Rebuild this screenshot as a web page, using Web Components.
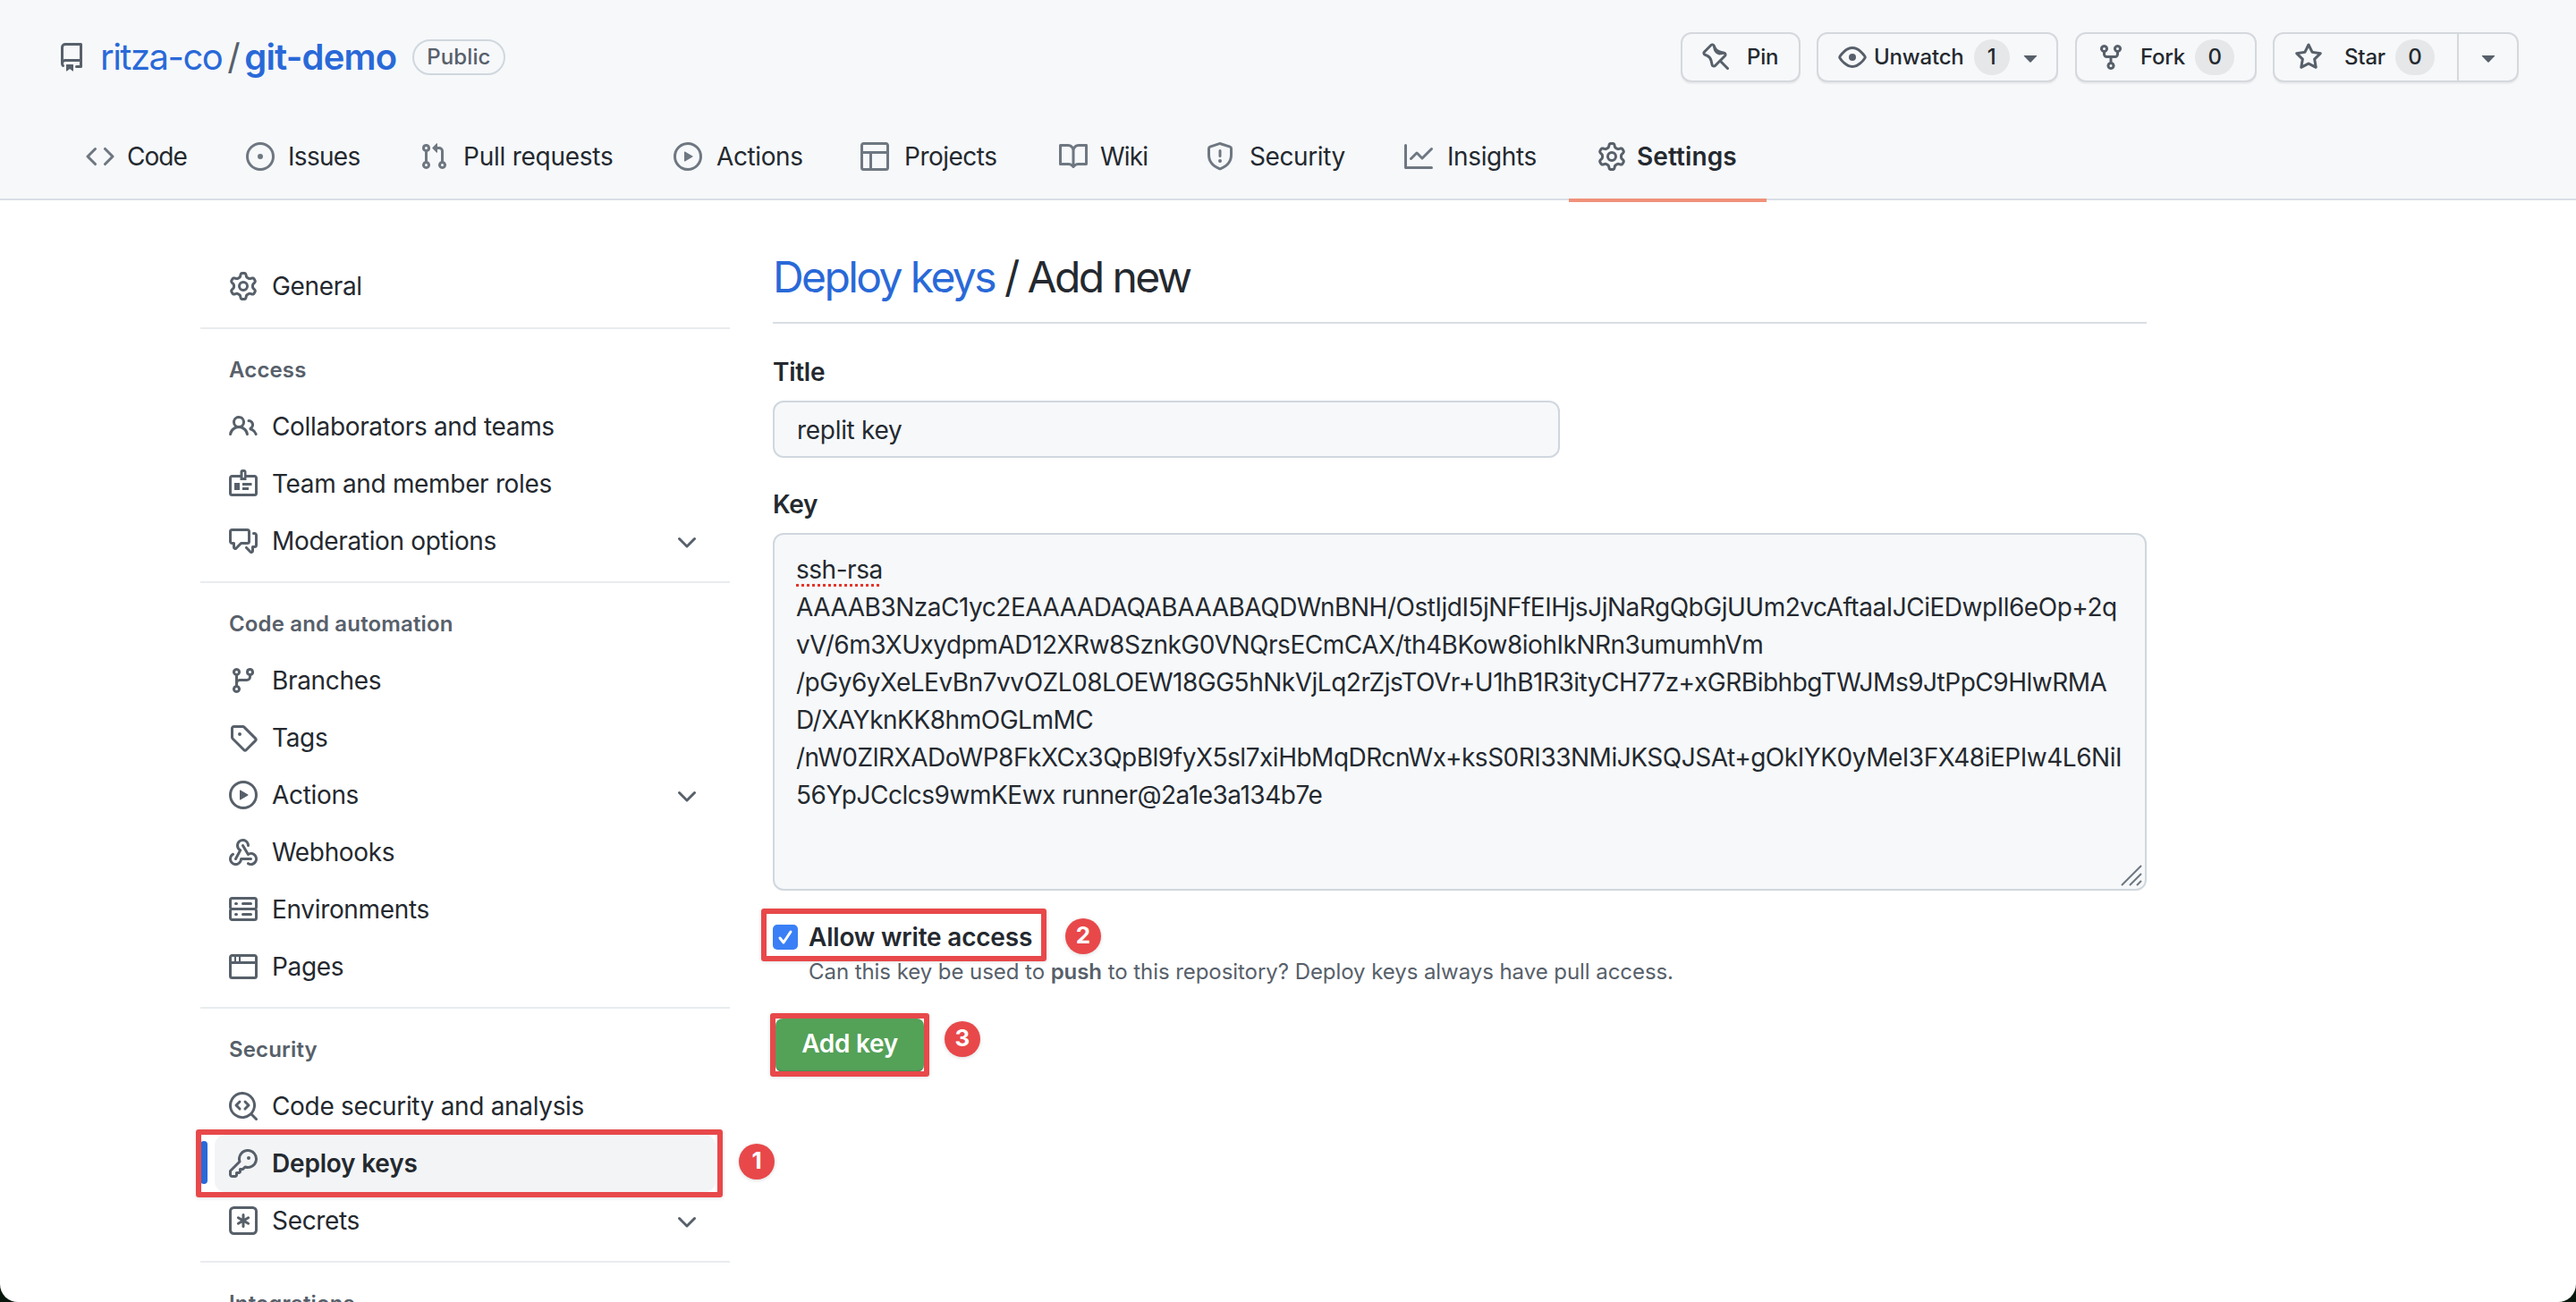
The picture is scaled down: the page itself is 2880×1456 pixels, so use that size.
<!DOCTYPE html>
<html lang="en">
<head>
<meta charset="utf-8">
<title>Deploy keys / Add new</title>
<style>
html,body{margin:0;padding:0;background:#08170e;height:100%;}
body{font-family:Inter,"Liberation Sans",sans-serif;color:#24292f;overflow:hidden;}
</style>
</head>
<body>
<gh-app>
  <gh-repo-header slot="header"></gh-repo-header>
  <gh-sidebar slot="side"></gh-sidebar>
  <gh-key-form slot="main"></gh-key-form>
  <gh-mark slot="over" x="219" y="1263" w="589" h="76"></gh-mark>
  <gh-dot slot="over" x="826" y="1279">1</gh-dot>
  <gh-mark slot="over" x="851" y="1016" w="319" h="59"></gh-mark>
  <gh-dot slot="over" x="1191" y="1027">2</gh-dot>
  <gh-mark slot="over" x="861" y="1133" w="178" h="71"></gh-mark>
  <gh-dot slot="over" x="1056" y="1142">3</gh-dot>
</gh-app>
<script>
const P={
repo:'<path d="M2 2.5A2.5 2.5 0 014.5 0h8.75a.75.75 0 01.75.75v12.5a.75.75 0 01-.75.75h-2.5a.75.75 0 110-1.5h1.75v-2h-8a1 1 0 00-.714 1.7.75.75 0 01-1.072 1.05A2.495 2.495 0 012 11.5v-9zm10.5-1V9h-8c-.356 0-.694.074-1 .208V2.5a1 1 0 011-1h8zM5 12.25v3.25a.25.25 0 00.4.2l1.45-1.087a.25.25 0 01.3 0L8.6 15.7a.25.25 0 00.4-.2v-3.25a.25.25 0 00-.25-.25h-3.5a.25.25 0 00-.25.25z"/>',
code:'<path d="M4.72 3.22a.75.75 0 011.06 1.06L2.06 8l3.72 3.72a.75.75 0 11-1.06 1.06L.47 8.53a.75.75 0 010-1.06l4.25-4.25zm6.56 0a.75.75 0 10-1.06 1.06L13.94 8l-3.72 3.72a.75.75 0 101.06 1.06l4.25-4.25a.75.75 0 000-1.06l-4.25-4.25z"/>',
issue:'<path d="M8 9.5a1.5 1.5 0 100-3 1.5 1.5 0 000 3z"/><path d="M8 0a8 8 0 100 16A8 8 0 008 0zM1.5 8a6.5 6.5 0 1113 0 6.5 6.5 0 01-13 0z"/>',
pr:'<path d="M7.177 3.073L9.573.677A.25.25 0 0110 .854v4.792a.25.25 0 01-.427.177L7.177 3.427a.25.25 0 010-.354zM3.75 2.5a.75.75 0 100 1.5.75.75 0 000-1.5zm-2.25.75a2.25 2.25 0 113 2.122v5.256a2.251 2.251 0 11-1.5 0V5.372A2.25 2.25 0 011.5 3.25zM11 2.5h-1V4h1a1 1 0 011 1v5.628a2.251 2.251 0 101.5 0V5A2.5 2.5 0 0011 2.5zm1 10.25a.75.75 0 111.5 0 .75.75 0 01-1.5 0zM3.75 12a.75.75 0 100 1.5.75.75 0 000-1.5z"/>',
play:'<path d="M1.5 8a6.5 6.5 0 1113 0 6.5 6.5 0 01-13 0zM8 0a8 8 0 100 16A8 8 0 008 0zM6.379 5.227A.25.25 0 006 5.442v5.117a.25.25 0 00.379.214l4.264-2.559a.25.25 0 000-.428L6.379 5.227z"/>',
table:'<path d="M0 1.75C0 .784.784 0 1.75 0h12.5C15.216 0 16 .784 16 1.75v12.5A1.75 1.75 0 0114.25 16H1.75A1.75 1.75 0 010 14.25V1.75zM6.5 6.5v8h7.75a.25.25 0 00.25-.25V6.5h-8zm8-1.5V1.75a.25.25 0 00-.25-.25H1.75a.25.25 0 00-.25.25V5h13zM5 6.5H1.5v7.75c0 .138.112.25.25.25H5v-8z"/>',
book:'<path d="M0 1.75A.75.75 0 01.75 1h4.253c1.227 0 2.317.59 3 1.501A3.744 3.744 0 0111.006 1h4.245a.75.75 0 01.75.75v10.5a.75.75 0 01-.75.75h-4.507a2.25 2.25 0 00-1.591.659l-.622.621a.75.75 0 01-1.06 0l-.622-.621A2.25 2.25 0 005.258 13H.75a.75.75 0 01-.75-.75V1.75zm8.755 3a2.25 2.25 0 012.25-2.25H14.5v9h-3.757c-.71 0-1.4.201-1.992.572l.004-7.322zm-1.504 7.324l.004-5.073-.002-2.253A2.25 2.25 0 005.003 2.5H1.5v9h3.757a3.75 3.75 0 011.994.574z"/>',
shield:'<path d="M7.467.133a1.75 1.75 0 011.066 0l5.25 1.68A1.75 1.75 0 0115 3.48V7c0 1.566-.32 3.182-1.303 4.682-.983 1.498-2.585 2.813-5.032 3.855a1.7 1.7 0 01-1.33 0c-2.447-1.042-4.049-2.357-5.032-3.855C1.32 10.182 1 8.566 1 7V3.48a1.75 1.75 0 011.217-1.667l5.25-1.68zm.61 1.429a.25.25 0 00-.153 0l-5.25 1.68a.25.25 0 00-.174.238V7c0 1.358.275 2.666 1.057 3.86.784 1.194 2.121 2.34 4.366 3.297a.2.2 0 00.154 0c2.245-.956 3.582-2.104 4.366-3.298C13.225 9.666 13.5 8.36 13.5 7V3.48a.25.25 0 00-.174-.237l-5.25-1.68zM9 10.5a1 1 0 11-2 0 1 1 0 012 0zm-.25-5.75a.75.75 0 10-1.5 0v3a.75.75 0 001.5 0v-3z"/>',
graph:'<path d="M1.5 1.75a.75.75 0 00-1.5 0v12.5c0 .414.336.75.75.75h14.5a.75.75 0 000-1.5H1.5V1.75zm14.28 2.53a.75.75 0 00-1.06-1.06L10 7.94 7.53 5.47a.75.75 0 00-1.06 0L3.22 8.72a.75.75 0 001.06 1.06L7 7.06l2.47 2.47a.75.75 0 001.06 0l5.25-5.25z"/>',
gear:'<path d="M8 0a8.2 8.2 0 0 1 .701.031C9.444.095 9.99.645 10.16 1.29l.288 1.107c.018.066.079.158.212.224.231.114.454.243.668.386.123.082.233.09.299.071l1.103-.303c.644-.176 1.392.021 1.82.63.27.385.506.792.704 1.218.315.675.111 1.422-.364 1.891l-.814.806c-.049.048-.098.147-.088.294.016.257.016.515 0 .772-.01.147.038.246.088.294l.814.806c.475.469.679 1.216.364 1.891a7.977 7.977 0 0 1-.704 1.217c-.428.61-1.176.807-1.82.63l-1.102-.302c-.067-.019-.177-.011-.3.071a5.909 5.909 0 0 1-.668.386c-.133.066-.194.158-.211.224l-.29 1.106c-.168.646-.715 1.196-1.458 1.26a8.006 8.006 0 0 1-1.402 0c-.743-.064-1.289-.614-1.458-1.26l-.289-1.106c-.018-.066-.079-.158-.212-.224a5.738 5.738 0 0 1-.668-.386c-.123-.082-.233-.09-.299-.071l-1.103.303c-.644.176-1.392-.021-1.82-.63a8.12 8.12 0 0 1-.704-1.218c-.315-.675-.111-1.422.363-1.891l.815-.806c.05-.048.098-.147.088-.294a6.214 6.214 0 0 1 0-.772c.01-.147-.038-.246-.088-.294l-.815-.806C.635 6.045.431 5.298.746 4.623a7.92 7.92 0 0 1 .704-1.217c.428-.61 1.176-.807 1.82-.63l1.102.302c.067.019.177.011.3-.071.214-.143.437-.272.668-.386.133-.066.194-.158.211-.224l.29-1.106C6.009.645 6.556.095 7.299.03 7.53.01 7.764 0 8 0Zm-.571 1.525c-.036.003-.108.036-.137.146l-.289 1.105c-.147.561-.549.967-.998 1.189-.173.086-.34.183-.5.29-.417.278-.97.423-1.529.27l-1.103-.303c-.109-.03-.175.016-.195.045-.22.312-.412.644-.573.99-.014.031-.021.11.059.19l.815.806c.411.406.562.957.53 1.456a4.709 4.709 0 0 0 0 .582c.032.499-.119 1.05-.53 1.456l-.815.806c-.081.08-.073.159-.059.19.162.346.353.677.573.989.02.03.085.076.195.046l1.102-.303c.56-.153 1.113-.008 1.53.27.161.107.328.204.501.29.447.222.85.629.997 1.189l.289 1.105c.029.109.101.143.137.146a6.6 6.6 0 0 0 1.142 0c.036-.003.108-.036.137-.146l.289-1.105c.147-.561.549-.967.998-1.189.173-.086.34-.183.5-.29.417-.278.97-.423 1.529-.27l1.103.303c.109.029.175-.016.195-.045.22-.313.411-.644.573-.99.014-.031.021-.11-.059-.19l-.815-.806c-.411-.406-.562-.957-.53-1.456a4.709 4.709 0 0 0 0-.582c-.032-.499.119-1.05.53-1.456l.815-.806c.081-.08.073-.159.059-.19a6.464 6.464 0 0 0-.573-.989c-.02-.03-.085-.076-.195-.046l-1.102.303c-.56.153-1.113.008-1.53-.27a4.44 4.44 0 0 0-.501-.29c-.447-.222-.85-.629-.997-1.189l-.289-1.105c-.029-.11-.101-.143-.137-.146a6.6 6.6 0 0 0-1.142 0ZM11 8a3 3 0 1 1-6 0 3 3 0 0 1 6 0ZM9.5 8a1.5 1.5 0 1 0-3.001.001A1.5 1.5 0 0 0 9.5 8Z"/>',
pin:'<path d="M4.456.734a1.75 1.75 0 012.826.504l.613 1.327a3.081 3.081 0 002.084 1.707l2.454.584c1.332.317 1.8 1.972.832 2.94L11.06 10l3.72 3.72a.75.75 0 11-1.061 1.06L10 11.06l-2.204 2.205c-.968.968-2.623.5-2.94-.832l-.584-2.454a3.081 3.081 0 00-1.707-2.084l-1.327-.613a1.75 1.75 0 01-.504-2.826L4.456.734zM5.92 1.866a.25.25 0 00-.404-.072L1.794 5.516a.25.25 0 00.072.404l1.328.613A4.582 4.582 0 015.73 9.63l.584 2.454a.25.25 0 00.42.12l5.47-5.47a.25.25 0 00-.12-.42L9.63 6.73a4.581 4.581 0 01-3.098-2.537L5.92 1.866z"/>',
eye:'<path d="M1.679 7.932c.412-.621 1.242-1.75 2.366-2.717C5.175 4.242 6.527 3.5 8 3.5c1.473 0 2.824.742 3.955 1.715 1.124.967 1.954 2.096 2.366 2.717a.119.119 0 010 .136c-.412.621-1.242 1.75-2.366 2.717C10.825 11.758 9.473 12.5 8 12.5c-1.473 0-2.824-.742-3.955-1.715C2.92 9.818 2.09 8.69 1.679 8.068a.119.119 0 010-.136zM8 2c-1.981 0-3.67.992-4.933 2.078C1.797 5.169.88 6.423.43 7.1a1.619 1.619 0 000 1.798c.45.678 1.367 1.932 2.637 3.024C4.329 13.008 6.019 14 8 14c1.981 0 3.67-.992 4.933-2.078 1.27-1.091 2.187-2.345 2.637-3.023a1.619 1.619 0 000-1.798c-.45-.678-1.367-1.932-2.637-3.023C11.671 2.992 9.981 2 8 2zm0 8a2 2 0 100-4 2 2 0 000 4z"/>',
fork:'<path d="M5 5.372v.878c0 .414.336.75.75.75h4.5a.75.75 0 00.75-.75v-.878a2.25 2.25 0 111.5 0v.878a2.25 2.25 0 01-2.25 2.25h-1.5v2.128a2.251 2.251 0 11-1.5 0V8.5h-1.5A2.25 2.25 0 013.5 6.25v-.878a2.25 2.25 0 111.5 0zM5 3.25a.75.75 0 10-1.5 0 .75.75 0 001.5 0zm6.75.75a.75.75 0 100-1.5.75.75 0 000 1.5zm-3 8.75a.75.75 0 10-1.5 0 .75.75 0 001.5 0z"/>',
star:'<path d="M8 .25a.75.75 0 01.673.418l1.882 3.815 4.21.612a.75.75 0 01.416 1.279l-3.046 2.97.719 4.192a.75.75 0 01-1.088.791L8 12.347l-3.766 1.98a.75.75 0 01-1.088-.79l.72-4.194L.818 6.374a.75.75 0 01.416-1.28l4.21-.611L7.327.668A.75.75 0 018 .25zm0 2.445L6.615 5.5a.75.75 0 01-.564.41l-3.097.45 2.24 2.184a.75.75 0 01.216.664l-.528 3.084 2.769-1.456a.75.75 0 01.698 0l2.77 1.456-.53-3.084a.75.75 0 01.216-.664l2.24-2.183-3.096-.45a.75.75 0 01-.564-.41L8 2.694v.001z"/>',
caret:'<path d="M4.427 7.427l3.396 3.396a.25.25 0 00.354 0l3.396-3.396A.25.25 0 0011.396 7H4.604a.25.25 0 00-.177.427z"/>',
chev:'<path d="M12.78 6.22a.75.75 0 010 1.06l-4.25 4.25a.75.75 0 01-1.06 0L3.22 7.28a.75.75 0 011.06-1.06L8 9.94l3.72-3.72a.75.75 0 011.06 0z"/>',
people:'<path d="M5.5 3.5a2 2 0 100 4 2 2 0 000-4zM2 5.5a3.5 3.5 0 115.898 2.549 5.507 5.507 0 013.034 4.084.75.75 0 11-1.482.235 4.001 4.001 0 00-7.9 0 .75.75 0 01-1.482-.236A5.507 5.507 0 013.102 8.05 3.49 3.49 0 012 5.5zM11 4a.75.75 0 100 1.5 1.5 1.5 0 01.666 2.844.75.75 0 00-.416.672v.352a.75.75 0 00.574.73c1.2.289 2.162 1.2 2.522 2.372a.75.75 0 101.434-.44 5.01 5.01 0 00-2.56-3.012A3 3 0 0011 4z"/>',
badge:'<path d="M6.25 3V1.25C6.25.56 6.81 0 7.5 0h1c.69 0 1.25.56 1.25 1.25V3h4.5C15.216 3 16 3.784 16 4.75v8.5A1.75 1.75 0 0114.25 15H1.75A1.75 1.75 0 010 13.25v-8.5C0 3.784.784 3 1.75 3h4.5zm1.5-1.5V4.5h.75V1.5h-.75zM1.75 4.5a.25.25 0 00-.25.25v8.5c0 .138.112.25.25.25h12.5a.25.25 0 00.25-.25v-8.5a.25.25 0 00-.25-.25h-4.5V6H6.25V4.5h-4.5z"/><path d="M3 7.5h3v4H3zM7.5 7.5h5.25V9H7.5zM7.5 10h3.5v1.5H7.5z"/>',
discuss:'<path d="M1.5 2.75a.25.25 0 01.25-.25h8.5a.25.25 0 01.25.25v5.5a.25.25 0 01-.25.25h-3.5a.75.75 0 00-.53.22L3.5 11.44V9.25a.75.75 0 00-.75-.75h-1a.25.25 0 01-.25-.25v-5.5zM1.75 1A1.75 1.75 0 000 2.75v5.5C0 9.216.784 10 1.75 10H2v1.543a1.457 1.457 0 002.487 1.03L7.061 10h3.189A1.75 1.75 0 0012 8.25v-5.5A1.75 1.75 0 0010.25 1h-8.5zM14.5 4.75a.25.25 0 00-.25-.25h-.5a.75.75 0 110-1.5h.5c.966 0 1.75.784 1.75 1.75v5.5A1.75 1.75 0 0114.25 12H14v1.543a1.457 1.457 0 01-2.487 1.03L9.22 12.28a.75.75 0 111.06-1.06l2.22 2.22v-2.19a.75.75 0 01.75-.75h1a.25.25 0 00.25-.25v-5.5z"/>',
branch:'<path d="M11.75 2.5a.75.75 0 100 1.5.75.75 0 000-1.5zm-2.25.75a2.25 2.25 0 113 2.122V6A2.5 2.5 0 0110 8.5H6a1 1 0 00-1 1v1.128a2.251 2.251 0 11-1.5 0V5.372a2.25 2.25 0 111.5 0v1.836A2.492 2.492 0 016 7h4a1 1 0 001-1v-.628A2.25 2.25 0 019.5 3.25zM4.25 12a.75.75 0 100 1.5.75.75 0 000-1.5zM3.5 3.25a.75.75 0 111.5 0 .75.75 0 01-1.5 0z"/>',
tag:'<path d="M2.5 7.775V2.75a.25.25 0 01.25-.25h5.025a.25.25 0 01.177.073l6.25 6.25a.25.25 0 010 .354l-5.025 5.025a.25.25 0 01-.354 0l-6.25-6.25a.25.25 0 01-.073-.177zm-1.5 0V2.75C1 1.784 1.784 1 2.75 1h5.025c.464 0 .91.184 1.238.513l6.25 6.25a1.75 1.75 0 010 2.474l-5.026 5.026a1.75 1.75 0 01-2.474 0l-6.25-6.25A1.75 1.75 0 011 7.775zM6 5a1 1 0 100 2 1 1 0 000-2z"/>',
webhook:'<path d="M5.5 4.25a2.25 2.25 0 014.5 0 .75.75 0 001.5 0 3.75 3.75 0 10-6.14 2.889l-2.272 4.258a.75.75 0 001.324.706L7 7.25a.75.75 0 00-.309-1.015A2.25 2.25 0 015.5 4.25z"/><path d="M7.364 3.607a.75.75 0 011.03.257l2.608 4.349a3.75 3.75 0 11-.628 6.785.75.75 0 01.752-1.299 2.25 2.25 0 10-.033-3.88.75.75 0 01-1.03-.256L7.107 4.636a.75.75 0 01.257-1.03z"/><path d="M2.9 8.776A.75.75 0 012.625 9.8a2.25 2.25 0 103.375 1.95.75.75 0 01.75-.75h5.5a.75.75 0 010 1.5H7.425a3.751 3.751 0 11-5.55-3.998.75.75 0 011.024.274z"/>',
server:'<path d="M1.75 1A1.75 1.75 0 000 2.75v4c0 .372.116.717.314 1a1.742 1.742 0 00-.314 1v4c0 .966.784 1.75 1.75 1.75h12.5A1.75 1.75 0 0016 12.75v-4c0-.372-.116-.717-.314-1 .198-.283.314-.628.314-1v-4A1.75 1.75 0 0014.25 1H1.75zm0 7.5a.25.25 0 00-.25.25v4c0 .138.112.25.25.25h12.5a.25.25 0 00.25-.25v-4a.25.25 0 00-.25-.25H1.75zM1.5 2.75a.25.25 0 01.25-.25h12.5a.25.25 0 01.25.25v4a.25.25 0 01-.25.25H1.75a.25.25 0 01-.25-.25v-4zm5.5 2a.75.75 0 01.75-.75h4.5a.75.75 0 010 1.5h-4.5A.75.75 0 017 4.75zM7.75 10a.75.75 0 000 1.5h4.5a.75.75 0 000-1.5h-4.5zM3 4.75A.75.75 0 013.75 4h.5a.75.75 0 010 1.5h-.5A.75.75 0 013 4.75zM3.75 10a.75.75 0 000 1.5h.5a.75.75 0 000-1.5h-.5z"/>',
browser:'<path d="M0 2.75C0 1.784.784 1 1.75 1h12.5c.966 0 1.75.784 1.75 1.75v10.5A1.75 1.75 0 0114.25 15H1.75A1.75 1.75 0 010 13.25V2.75zm1.75-.25a.25.25 0 00-.25.25v10.5c0 .138.112.25.25.25h12.5a.25.25 0 00.25-.25V2.75a.25.25 0 00-.25-.25H1.75z"/><path d="M1 5h14v1.5H1zM3 2.5h1V5H3zM5.5 2.5h1V5h-1z"/>',
scan:'<path d="M8.47 4.97a.75.75 0 000 1.06L9.94 7.5 8.47 8.97a.75.75 0 101.06 1.06l2-2a.75.75 0 000-1.06l-2-2a.75.75 0 00-1.06 0zM6.53 6.03a.75.75 0 00-1.06-1.06l-2 2a.75.75 0 000 1.06l2 2a.75.75 0 101.06-1.06L5.06 7.5l1.47-1.47z"/><path d="M12.246 13.307a7.5 7.5 0 111.06-1.06l2.474 2.473a.75.75 0 11-1.06 1.06l-2.474-2.473zM1.5 7.5a6 6 0 1110.386 4.094.75.75 0 00-.292.293A6 6 0 011.5 7.5z"/>',
key:'<path d="M6.5 5.5a4 4 0 112.731 3.795.75.75 0 00-.768.18L7.44 10.5H6.25a.75.75 0 00-.75.75v1.19l-.06.06H4.25a.75.75 0 00-.75.75v1.19l-.06.06H1.75a.25.25 0 01-.25-.25v-1.69l5.024-5.023a.75.75 0 00.181-.768A3.995 3.995 0 016.5 5.5zm4-5.5a5.5 5.5 0 00-5.348 6.788L.22 11.72a.75.75 0 00-.22.53v2C0 15.216.784 16 1.75 16h2a.75.75 0 00.53-.22l.5-.5a.75.75 0 00.22-.53V14h.75a.75.75 0 00.53-.22l.5-.5a.75.75 0 00.22-.53V12h.75a.75.75 0 00.53-.22l.932-.932A5.5 5.5 0 1010.5 0zm.5 6a1 1 0 100-2 1 1 0 000 2z"/>',
asterisk:'<path d="M0 2.75A2.75 2.75 0 012.75 0h10.5A2.75 2.75 0 0116 2.75v10.5A2.75 2.75 0 0113.25 16H2.75A2.75 2.75 0 010 13.25V2.75zM2.75 1.5c-.69 0-1.25.56-1.25 1.25v10.5c0 .69.56 1.25 1.25 1.25h10.5c.69 0 1.25-.56 1.25-1.25V2.75c0-.69-.56-1.25-1.25-1.25H2.75z"/><path d="M8 4a.75.75 0 01.75.75V6.7l1.69-.975a.75.75 0 01.75 1.3L9.5 8l1.69.976a.75.75 0 01-.75 1.298L8.75 9.3v1.951a.75.75 0 01-1.5 0V9.299l-1.69.976a.75.75 0 01-.75-1.3L6.5 8l-1.69-.975a.75.75 0 01.75-1.3l1.69.976V4.75A.75.75 0 018 4z"/>'
};
const define=(name,render)=>customElements.define(name,class extends HTMLElement{
  constructor(){super();this.attachShadow({mode:'open'});}
  connectedCallback(){this.shadowRoot.innerHTML=render(this);}
});
const attr=(el,n,d='')=>el.getAttribute(n)??d;

define('gh-icon',el=>`<style>:host{display:inline-flex;flex:none;width:${attr(el,'size','32')}px;height:${attr(el,'size','32')}px;color:${attr(el,'color','#57606a')}}svg{display:block;width:100%;height:100%;fill:currentColor;fill-rule:evenodd}</style><svg viewBox="0 0 16 16" aria-hidden="true">${P[attr(el,'name')]}</svg>`);

define('gh-app',()=>`<style>
:host{display:block;position:relative;width:2880px;height:1456px;overflow:hidden;background:#fff;border-radius:0 0 20px 20px;font:28px/42px Inter,"Liberation Sans",sans-serif;color:#24292f;-webkit-font-smoothing:antialiased}
.body{display:flex;gap:48px;padding-left:224px}
</style><slot name="header"></slot><div class="body"><slot name="side"></slot><slot name="main"></slot></div><slot name="over"></slot>`);

define('gh-tab',el=>{
  const on=el.hasAttribute('active');
  return `<style>
:host{display:flex;align-items:center;gap:${attr(el,'gap','15')}px;flex:none;width:${attr(el,'w')}px;height:96px;box-sizing:border-box;padding:0 0 2px 32px;font-size:28px;letter-spacing:${attr(el,'ls','-.4')}px;color:#24292f;${on?'font-weight:600;border-bottom:4px solid #f0917a;padding-bottom:0;margin-bottom:-2px;height:98px;':''}}
</style><gh-icon name="${attr(el,'icon')}" color="${on?'#57606a':'#6e7781'}"></gh-icon><slot></slot>`;
});

define('gh-action',el=>{
  const c=attr(el,'count');
  return `<style>
:host{display:flex;align-items:center;flex:none;width:${attr(el,'w')}px;height:56px;box-sizing:border-box;background:#f6f8fa;border:2px solid #d5d8dc;border-radius:12px;box-shadow:0 2px 1px rgba(27,31,36,.06);font-size:24px;font-weight:500;letter-spacing:-.2px;padding:0 0 0 22px;color:#24292f}
.l{margin-left:${attr(el,'gap','16')}px}
.c{margin-left:11px;min-width:${attr(el,'cw','40')}px;height:40px;border-radius:20px;background:#e5e7e9;display:flex;align-items:center;justify-content:center}
.k{margin-left:7px}
.d{align-self:stretch;width:2px;background:#d5d8dc;margin-left:auto;margin-right:17px}
.e{width:16px;flex:none}
</style><gh-icon name="${attr(el,'icon')}"></gh-icon><span class="l"><slot></slot></span>${c?`<span class="c">${c}</span>`:''}${el.hasAttribute('caret')?'<gh-icon class="k" name="caret"></gh-icon>':''}${el.hasAttribute('split')?'<span class="d"></span><gh-icon name="caret"></gh-icon><span class="e"></span>':''}`;
});

define('gh-repo-header',()=>`<style>
:host{display:block;height:224px;box-sizing:border-box;background:#f6f8fa;border-bottom:2px solid #d8dee4}
.top{display:flex;align-items:center;height:56px;padding:36px 64px 0 64px}
.name{display:flex;align-items:center;font-size:40px;line-height:56px;color:#2969d8;letter-spacing:-1.5px}
.name gh-icon{margin-right:16px}
.sl{color:#57606a;margin:0 6px}
b{font-weight:600;letter-spacing:-.8px}
.pub{margin-left:18px;height:40px;box-sizing:border-box;border:2px solid #d0d7de;border-radius:20px;padding:0 14px;font-size:24px;line-height:36px;font-weight:500;color:#57606a;letter-spacing:.1px}
.acts{margin-left:auto;display:flex;gap:18px}
gh-action.f{margin-left:1px}
nav{display:flex;height:96px;margin-top:36px;padding-left:64px}
</style>
<div class="top">
  <div class="name"><gh-icon name="repo"></gh-icon><span>ritza-co</span><span class="sl">/</span><b>git-demo</b></div>
  <span class="pub">Public</span>
  <div class="acts">
    <gh-action icon="pin" gap="18" w="134">Pin</gh-action>
    <gh-action icon="eye" gap="8" count="1" caret w="270">Unwatch</gh-action>
    <gh-action class="f" icon="fork" gap="17" count="0" cw="44" w="203">Fork</gh-action>
    <gh-action icon="star" gap="24" count="0" cw="44" split w="275">Star</gh-action>
  </div>
</div>
<nav>
  <gh-tab icon="code" w="179" gap="14" ls="-1">Code</gh-tab>
  <gh-tab icon="issue" w="194" ls="-.7">Issues</gh-tab>
  <gh-tab icon="pr" w="284" gap="17" ls="-.25">Pull requests</gh-tab>
  <gh-tab icon="play" w="209" gap="16">Actions</gh-tab>
  <gh-tab icon="table" w="222" gap="17" ls="-.5">Projects</gh-tab>
  <gh-tab icon="book" w="164" gap="14" ls="-.8">Wiki</gh-tab>
  <gh-tab icon="shield" w="222" gap="17">Security</gh-tab>
  <gh-tab icon="graph" w="216" gap="16">Insights</gh-tab>
  <gh-tab icon="gear" active w="221" gap="12" ls=".1">Settings</gh-tab>
</nav>`);

define('gh-nav-item',el=>`<style>
:host{display:flex;align-items:center;height:64px;box-sizing:border-box;padding:0 32px;gap:16px;font-size:28px;letter-spacing:${el.hasAttribute('active')?'-.2':'-.33'}px;position:relative;color:#24292f;${el.hasAttribute('active')?'font-weight:600;':''}}
.t{flex:1}
</style><gh-icon name="${attr(el,'icon')}"></gh-icon><span class="t"><slot></slot></span>${el.hasAttribute('more')?'<gh-icon name="chev"></gh-icon>':''}`);

define('gh-nav-section',el=>{
  const h=attr(el,'heading');
  return `<style>
:host{display:block;box-sizing:border-box;${el.hasAttribute('last')?'':'border-bottom:2px solid #e9ecef;padding-bottom:13px;'}${h?'padding-top:28px;':'padding-bottom:14px;'}}
h3{margin:0 0 13px;padding:0 32px;font-size:24px;line-height:36px;font-weight:600;color:#57606a;letter-spacing:.15px}
</style>${h?`<h3>${h}</h3>`:''}<slot></slot>`;
});

define('gh-active-row',()=>`<style>
:host{display:block;position:relative;height:64px}
.bar{position:absolute;left:0;top:7px;width:8px;height:48px;border-radius:4px;background:#2969d8}
.bg{position:absolute;left:16px;right:16px;top:0;bottom:0;background:#f3f4f6;border-radius:12px}
.it{position:relative}
</style><div class="bg"></div><div class="bar"></div><div class="it"><slot></slot></div>`);

define('gh-sidebar',()=>`<style>
:host{display:block;flex:none;width:592px;padding-top:64px}
</style>
<gh-nav-section><gh-nav-item icon="gear">General</gh-nav-item></gh-nav-section>
<gh-nav-section heading="Access">
  <gh-nav-item icon="people">Collaborators and teams</gh-nav-item>
  <gh-nav-item icon="badge">Team and member roles</gh-nav-item>
  <gh-nav-item icon="discuss" more>Moderation options</gh-nav-item>
</gh-nav-section>
<gh-nav-section heading="Code and automation">
  <gh-nav-item icon="branch">Branches</gh-nav-item>
  <gh-nav-item icon="tag">Tags</gh-nav-item>
  <gh-nav-item icon="play" more>Actions</gh-nav-item>
  <gh-nav-item icon="webhook">Webhooks</gh-nav-item>
  <gh-nav-item icon="server">Environments</gh-nav-item>
  <gh-nav-item icon="browser">Pages</gh-nav-item>
</gh-nav-section>
<gh-nav-section heading="Security">
  <gh-nav-item icon="scan">Code security and analysis</gh-nav-item>
  <gh-active-row><gh-nav-item icon="key" active>Deploy keys</gh-nav-item></gh-active-row>
  <gh-nav-item icon="asterisk" more>Secrets</gh-nav-item>
</gh-nav-section>
<gh-nav-section heading="Integrations" last></gh-nav-section>`);

define('gh-key-form',()=>`<style>
:host{display:block;flex:none;width:1536px;padding-top:50px;letter-spacing:-.3px}
h2{margin:0;padding-bottom:14px;border-bottom:2px solid #d8dee4;font-size:48px;line-height:72px;font-weight:400;letter-spacing:-2.6px}
h2 a{color:#2969d8}
label{display:block;font-weight:600;line-height:42px;margin:31px 0 11px}
label.first{margin-top:33px}
.in{box-sizing:border-box;width:880px;height:64px;background:#f6f8fa;border:2px solid #d0d7de;border-radius:12px;padding:2px 25px 0;line-height:58px}
.ta{position:relative;box-sizing:border-box;height:400px;background:#f6f8fa;border:2px solid #d0d7de;border-radius:12px;padding:18px 24px;line-height:42px;white-space:pre;letter-spacing:-.48px}
.sq{text-decoration:underline dotted #e5342b 3px;text-underline-offset:6px}
.grip{position:absolute;right:2px;bottom:2px;width:26px;height:26px}
.chk{display:flex;align-items:center;margin-top:31px;font-weight:600;height:42px;letter-spacing:-.2px}
.box{width:28px;height:28px;border-radius:5px;background:#3a7ff6;margin-right:12px;flex:none}
.box svg{display:block}
.note{margin-left:40px;font-size:24px;line-height:36px;color:#57606a;letter-spacing:-.06px}
.note b{font-weight:600}
.btn{margin-top:34px;width:166px;margin-left:3px;height:60px;box-sizing:border-box;background:#54a158;border-bottom:2px solid #4a8b4f;border-radius:8px;color:#fff;font-weight:600;padding-bottom:2px;display:flex;align-items:center;justify-content:center}
</style>
<h2><a>Deploy keys</a> / Add new</h2>
<label class="first">Title</label>
<div class="in">replit key</div>
<label>Key</label>
<div class="ta"><span class="sq">ssh-rsa</span>
AAAAB3NzaC1yc2EAAAADAQABAAABAQDWnBNH/OstIjdI5jNFfEIHjsJjNaRgQbGjUUm2vcAftaaIJCiEDwpIl6eOp+2q
vV/6m3XUxydpmAD12XRw8SznkG0VNQrsECmCAX/th4BKow8iohIkNRn3umumhVm
/pGy6yXeLEvBn7vvOZL08LOEW18GG5hNkVjLq2rZjsTOVr+U1hB1R3ityCH77z+xGRBibhbgTWJMs9JtPpC9HlwRMA
D/XAYknKK8hmOGLmMC
/nW0ZlRXADoWP8FkXCx3QpBl9fyX5sl7xiHbMqDRcnWx+ksS0RI33NMiJKSQJSAt+gOkIYK0yMeI3FX48iEPIw4L6NiI
56YpJCclcs9wmKEwx runner@2a1e3a134b7e<svg class="grip" viewBox="0 0 26 26" fill="none" stroke="#6e7781" stroke-width="2"><path d="M2 24L24 2M11 24L24 11M19 24L24 19"/></svg></div>
<div class="chk"><span class="box"><svg viewBox="0 0 28 28" width="28" height="28" fill="none" stroke="#fff" stroke-width="3" stroke-linecap="round" stroke-linejoin="round"><path d="M8 15l4 5 8-12"/></svg></span>Allow write access</div>
<div class="note">Can this key be used to <b>push</b> to this repository? Deploy keys always have pull access.</div>
<div class="btn">Add key</div>`);

define('gh-mark',el=>`<style>
:host{position:absolute;left:${attr(el,'x')}px;top:${attr(el,'y')}px;width:${attr(el,'w')}px;height:${attr(el,'h')}px;box-sizing:border-box;border:6px solid #e8484a;border-radius:3px;box-shadow:0 1px 4px rgba(0,0,0,.12);pointer-events:none}
</style>`);

define('gh-dot',el=>`<style>
:host{position:absolute;left:${attr(el,'x')}px;top:${attr(el,'y')}px;width:40px;height:40px;border-radius:50%;background:#e8484a;color:#fff;font:700 26px/38px Inter,"Liberation Sans",sans-serif;text-align:center;box-shadow:0 1px 4px rgba(0,0,0,.15)}
</style><slot></slot>`);
</script>
</body>
</html>
